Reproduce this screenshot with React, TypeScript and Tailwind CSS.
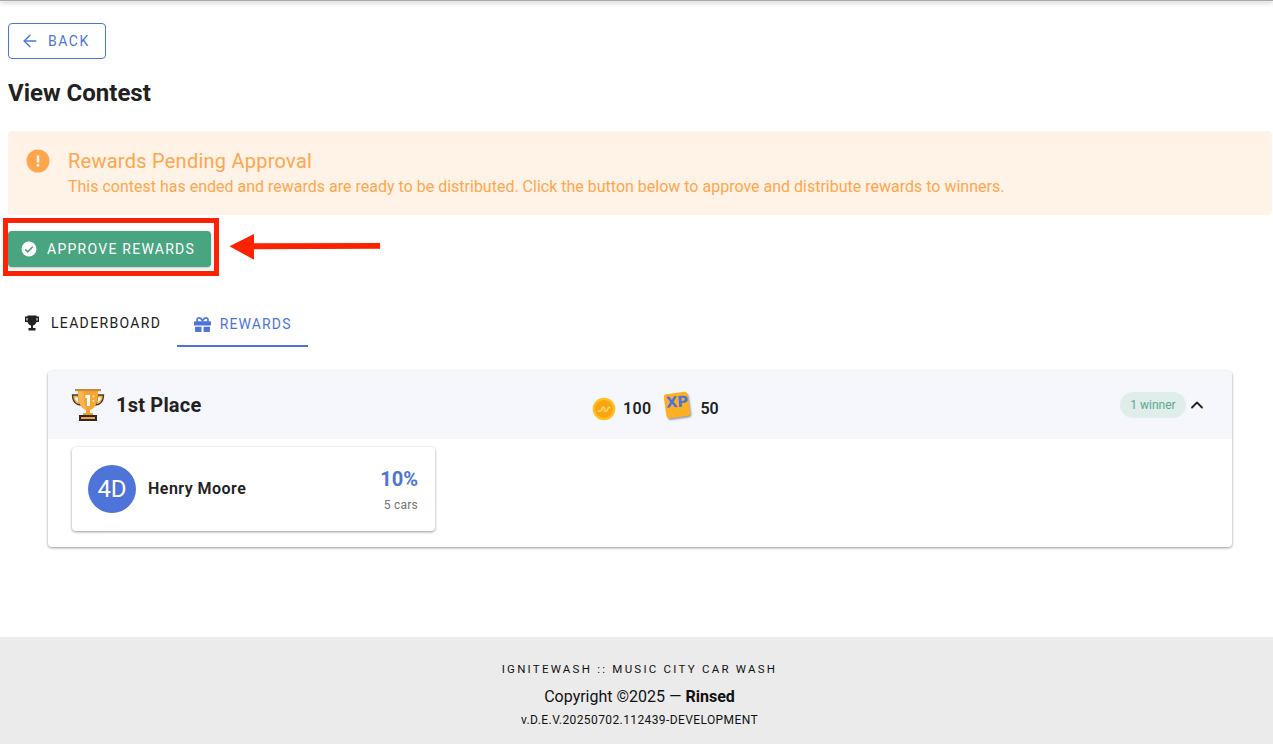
import React from 'react';
import { ArrowLeft, ChevronUp } from 'lucide-react';
import { FaGift } from 'react-icons/fa';

const TrophyIcon = () => (
  <svg width="16" height="16" viewBox="0 0 16 16" fill="#212121">
    <path d="M1 1.500h3.500v1.500H2.500v2.500h2V7H1zM15 1.500h-3.500v1.500h2v2.500h-2V7H15z" />
    <path d="M3.500 0.500h9V6c0 2.500-1.700 4-3.500 4.500V13h2.500v2.500h-7V13H7v-2.500C5.200 10 3.500 8.500 3.500 6z" />
  </svg>
);

const CheckCircle = () => (
  <svg width="18" height="18" viewBox="0 0 24 24">
    <circle cx="12" cy="12" r="10" fill="#fff" />
    <path d="M7 12.500l3.300 3.300L17 9" fill="none" stroke="#48a57f" strokeWidth="2.200" />
  </svg>
);

const WarningIcon = () => (
  <svg width="24" height="24" viewBox="0 0 24 24">
    <circle cx="12" cy="12" r="11.500" fill="#ffa64d" />
    <rect x="10.800" y="6.500" width="2.400" height="7" fill="#fff" />
    <rect x="10.800" y="15" width="2.400" height="2.500" fill="#fff" />
  </svg>
);

const PlaceTrophy = () => (
  <svg width="34" height="34" viewBox="0 0 34 34">
    <path d="M1.500 7h6v3c0 3 1 5 2 7-4 0-8-3-8-10zM32.500 7h-6v3c0 3-1 5-2 7 4 0 8-3 8-10z" fill="#f7b04a" stroke="#4a3a28" strokeWidth="1.300" />
    <path d="M4 9.500h3c0 1.800.3 3.300.8 4.800C5.300 13.500 4.300 12 4 9.500zM30 9.500h-3c0 1.800-.3 3.300-.8 4.800 2.500-.8 3.500-2.300 3.800-4.800z" fill="#fff" />
    <path d="M7 3h20c0 5 0 8-1 11-1 4-4 7-7 8v3.500h-4V22c-3-1-6-4-7-8-1-3-1-6-1-11z" fill="#f9a534" />
    <path d="M7 3h6c-.5 8 0 14 3 19-3-1-7-4-8-8-1-3-1-6-1-11z" fill="#fbb455" />
    <rect x="4" y="1" width="26" height="2.200" fill="#c98a3a" />
    <path d="M14.500 7h4.500v11h-3v-8h-1.500z" fill="#fff" />
    <rect x="21.500" y="7.500" width="1.800" height="1.800" fill="#ffe6bd" />
    <rect x="21.500" y="12" width="1.800" height="1.800" fill="#ffe6bd" />
    <rect x="12" y="25" width="10" height="2" fill="#f0992a" />
    <rect x="8" y="27" width="18" height="6" fill="#2b2b2b" />
    <rect x="10" y="29" width="14" height="2" fill="#f7a335" />
  </svg>
);

const CoinIcon = () => (
  <svg width="24" height="24" viewBox="0 0 24 24">
    <circle cx="12" cy="12" r="11.300" fill="#ffc21c" />
    <circle cx="12" cy="12" r="9" fill="#f9a315" />
    <path d="M6.500 14c1.200.7 2.300.2 2.800-.8l.9-2c.5-1.100 1.800-1.200 2.300-.3.400.7.200 1.400-.1 2.100-.4 1 .8 1.700 1.900 1 .9-.6 1.200-1.800 1.700-2.700.4-.7 1-1 1.700-.8" fill="none" stroke="#ffd65c" strokeWidth="1.700" strokeLinecap="round" />
  </svg>
);

const XpIcon = () => (
  <div className="flex h-6 w-6 -translate-y-[4px] -rotate-[8deg] justify-center rounded-[3px] bg-[#fdb022] shadow-[1px_2px_2px_rgba(0,0,0,0.35)]">
    <span className="mt-[2px] rotate-[4deg] text-[15px] leading-none font-black tracking-tight text-[#4f74d9] [font-family:'DejaVu_Sans',sans-serif]">
      XP
    </span>
  </div>
);

export default function App() {
  return (
    <div className="relative flex min-h-[744px] flex-col bg-white text-[#212121] [font-family:Roboto,sans-serif]">
      <div className="h-px bg-[#a8a8a8] shadow-[0_1px_5px_rgba(0,0,0,0.6)]" />

      <main className="flex-1 px-2 pt-[22px]">
        <button className="flex h-9 w-[98px] items-center gap-2 rounded border border-[#4f74d9] pl-[11px] text-[14px] font-normal tracking-[0.11em] text-[#4f74d9]">
          <ArrowLeft size={20} strokeWidth={1.600} />
          <span>BACK</span>
        </button>

        <h1 className="mt-[20px] h-7 text-[24px] leading-7 font-bold">View Contest</h1>

        <div className="mt-6 mr-[-7px] flex h-[84px] gap-[18px] rounded bg-[#fff3e8] pt-[18px] pl-[18px] text-[#ffa64d]">
          <WarningIcon />
          <div>
            <div className="text-[20px] leading-6 tracking-[0.25px]">Rewards Pending Approval</div>
            <div className="mt-[5px] text-[16px] leading-[18px]">
              This contest has ended and rewards are ready to be distributed. Click the button
              below to approve and distribute rewards to winners.
            </div>
          </div>
        </div>

        <button className="mt-4 flex h-9 w-[203px] items-center gap-[9px] rounded bg-[#48a57f] pl-3 text-[14px] tracking-[0.09em] text-white shadow-[0_1px_3px_rgba(0,0,0,0.25)]">
          <CheckCircle />
          <span>APPROVE REWARDS</span>
        </button>

        <div className="mt-[31px] flex pl-[8px]">
          <div className="flex h-[49px] items-center gap-[11px] px-2 pt-[1px] text-[14px] tracking-[0.095em]">
            <TrophyIcon />
            <span>LEADERBOARD</span>
          </div>
          <div className="ml-[8px] flex h-[49px] w-[131px] items-center justify-center gap-[9px] border-b-2 border-[#4f74d9] pt-[5px] text-[14px] tracking-[0.08em] text-[#4f74d9]">
            <FaGift size={17} />
            <span>REWARDS</span>
          </div>
        </div>

        <section className="mt-6 ml-10 w-[1184px] overflow-hidden rounded bg-white shadow-[0_1px_3px_rgba(0,0,0,0.4)]">
          <div className="flex h-[68px] items-center bg-[#f5f7fc] pr-[25px] pl-[23px]">
            <div className="flex w-[521px] items-center gap-[11px]">
              <PlaceTrophy />
              <span className="text-[20px] font-bold tracking-[0.01em]">1st Place</span>
            </div>
            <div className="mt-2 flex items-center">
              <CoinIcon />
              <span className="ml-[7px] text-[16px] font-semibold tracking-[0.02em]">100</span>
              <span className="ml-[14px]">
                <XpIcon />
              </span>
              <span className="ml-[11px] text-[16px] font-semibold">50</span>
            </div>
            <div className="ml-auto flex items-center gap-px">
              <span className="flex h-[26px] w-[66px] items-center justify-center rounded-full bg-[#dfeeea] text-[12px] text-[#5ba88c]">
                1 winner
              </span>
              <ChevronUp size={20} strokeWidth={2.200} />
            </div>
          </div>

          <div className="px-6 pt-2 pb-4">
            <div className="flex h-[84px] w-[363px] items-center rounded bg-white pr-[17px] pl-4 shadow-[0_1px_3px_rgba(0,0,0,0.4)]">
              <div className="flex h-12 w-12 items-center justify-center rounded-full bg-[#4f74d9] text-[24px] text-white">
                4D
              </div>
              <span className="ml-3 text-[16px] font-semibold tracking-[0.03em]">Henry Moore</span>
              <div className="ml-auto pt-[2px] text-right">
                <div className="text-[20px] leading-6 font-bold text-[#4f74d9]">10%</div>
                <div className="mt-[6px] text-[12px] leading-4 tracking-[0.02em] text-[#757575]">
                  5 cars
                </div>
              </div>
            </div>
          </div>
        </section>
      </main>

      <footer className="flex h-[107px] flex-col items-center bg-[#ebebeb] pt-[24px] pl-[6px] text-[#111]">
        <div className="text-[11.500px] leading-4 tracking-[2.240px]">
          IGNITEWASH :: MUSIC CITY CAR WASH
        </div>
        <div className="mt-[8px] text-[16px] leading-6">
          Copyright ©2025 — <span className="font-bold">Rinsed</span>
        </div>
        <div className="mt-[3px] text-[12px] leading-4 tracking-[0.4px]">
          v.D.E.V.20250702.112439-DEVELOPMENT
        </div>
      </footer>

      {/* red annotation drawn over the screenshot */}
      <div className="absolute top-[218px] left-[3px] h-[58px] w-[216px] border-[5px] border-[#ff2200]" />
      <svg className="absolute top-[230px] left-[228px]" width="154" height="32" viewBox="0 0 154 32">
        <path d="M1.500 16.300 L26 4 V13.300 L152 13 V18.700 L26 19.300 V29.700 Z" fill="#ff2200" />
      </svg>
    </div>
  );
}
